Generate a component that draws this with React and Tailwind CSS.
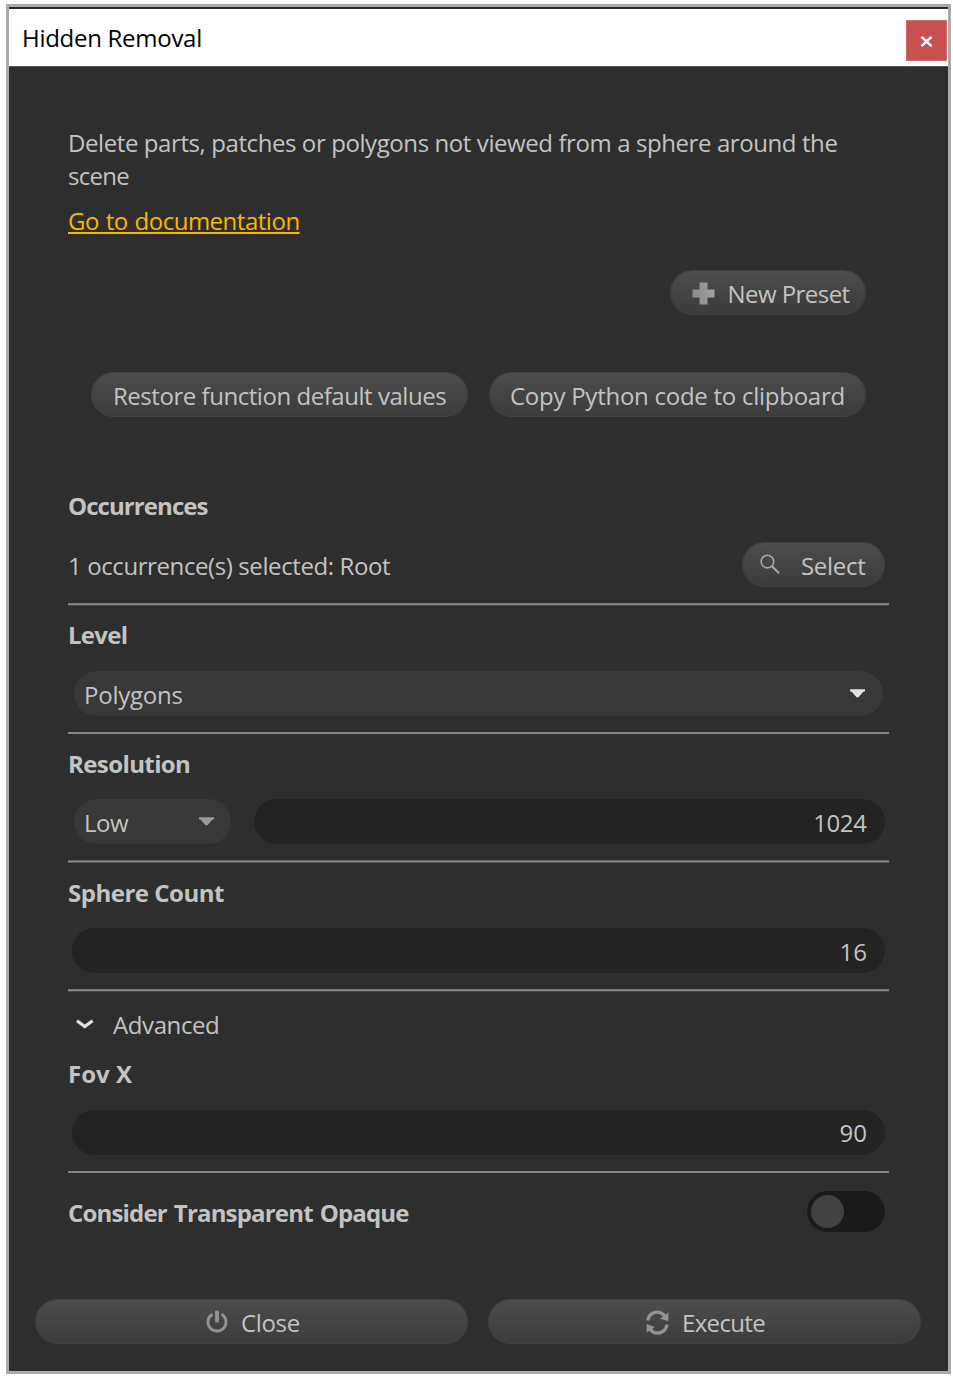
const pill = "flex h-[45px] rounded-full";
const raised = "bg-linear-to-b from-[#4c4c4c] to-[#3c3c3c] border border-[#424242] border-x-[#404040]";

function Label({ children, className = "" }) {
  return <div className={`h-[33px] whitespace-nowrap font-bold ${className}`}>{children}</div>;
}

function Divider({ className }) {
  return <div className={`h-[3px] w-full border-y ${className}`} />;
}

function Button({ children, className = "" }) {
  return <button type="button" className={`${pill} ${raised} whitespace-nowrap pt-[6px] ${className}`}>{children}</button>;
}

function Field({ value, className = "" }) {
  return <div className={`${pill} justify-end bg-[#232323] pt-[7px] ${className}`}>{value}</div>;
}

function Caret({ className }) {
  return (
    <svg className={`h-[9px] w-[15px] shrink-0 ${className}`} viewBox="0 0 15 9" fill="currentColor">
      <path d="M0 0.3H15V2.2L13 3L8.5 8.2H6.5L2 3L0 2.2Z" />
    </svg>
  );
}

function PlusIcon() {
  return (
    <svg className="mt-[4.5px] h-[23px] w-[23px] shrink-0" viewBox="0 0 23 23">
      <defs>
        <linearGradient id="plus" x1="0" x2="1">
          <stop offset="0" stopColor="#8a8a8a" />
          <stop offset="1" stopColor="#a2a2a2" />
        </linearGradient>
      </defs>
      <path d="M7.5 0.5H15.5V7.5H22.5V15.5H15.5V22.5H7.5V15.5H0.5V7.5H7.5Z" fill="url(#plus)" />
    </svg>
  );
}

function SearchIcon() {
  return (
    <svg className="mt-[5px] h-[21px] w-[21px] shrink-0" viewBox="0 0 21 21" fill="none" stroke="#a8a8a8">
      <circle cx="7.4" cy="7.6" r="6.3" strokeWidth="1.6" />
      <path d="M11.8 12L19 19.2" strokeWidth="2.1" />
    </svg>
  );
}

function PowerIcon() {
  return (
    <svg className="mt-[4px] h-[23px] w-[22px] shrink-0" viewBox="0 0 22 23" fill="none" stroke="#929292">
      <path d="M6.4 4.3A9 9 0 1 0 15.6 4.3" strokeWidth="3" />
      <path d="M11 0.7V12.5" strokeWidth="3.8" />
    </svg>
  );
}

function RefreshIcon() {
  return (
    <svg className="mt-[4px] h-[25px] w-[23px] shrink-0" viewBox="0 0 23 25">
      <g fill="none" stroke="#929292" strokeWidth="3.4">
        <path d="M1.8 10.6C3.2 1.6 13.6 -0.6 18.6 6" />
        <path d="M21 14.6C19.6 23.6 9.2 25.8 4.2 19.2" />
      </g>
      <g fill="#929292">
        <path d="M22.4 2.4V11.2L14 8.8L22.4 2.4Z" />
        <path d="M0.6 22.8V14L9 17L0.6 22.8Z" />
      </g>
    </svg>
  );
}

export default function App() {
  return (
    <div className="h-[1377px] w-[953px] overflow-hidden bg-white pl-[6px] pt-[4px] font-['Open_Sans','Noto_Sans',sans-serif] text-[24px] leading-[33px] text-[#c3c3c3]">
      <div className="h-[1370px] w-[945px] border-[3px] border-[#aeaaaa] bg-[#2e2e2e]">
        <header className="flex h-[60px] border-b border-t-2 border-b-[#565656] border-t-[#2a2a2c] bg-white pl-[13px]">
          <h1 className="mt-[12px] flex-1 whitespace-nowrap tracking-[-0.28px] text-black">Hidden Removal</h1>
          <button type="button" className="mr-px mt-[11px] flex h-[41px] w-[41px] items-center justify-center border border-[#d16a6a] bg-[#c75050] pt-px">
            <svg className="h-[11px] w-[13px]" viewBox="0 0 13 11" fill="none" stroke="#fff" strokeWidth="2.4">
              <path d="M1.5 0.8L11.5 10.2M11.5 0.8L1.5 10.2" />
            </svg>
          </button>
        </header>

        <main className="ml-[59px] flex w-[821px] flex-col pt-[59px]">
          <p>
            <span className="block whitespace-nowrap tracking-[-0.41px]">Delete parts, patches or polygons not viewed from a sphere around the</span>
            <span className="block tracking-[-0.7px]">scene</span>
          </p>
          <a href="#" className="mt-[12px] h-[33px] self-start whitespace-nowrap tracking-[-0.48px] [word-spacing:1px] text-[#fab702] underline decoration-2 underline-offset-[2px]">Go to documentation</a>

          <div className="mt-[33px] flex justify-end pr-[23px]">
            <Button className="w-[196px] pl-[20.5px]">
              <PlusIcon />
              <span className="ml-[13px] tracking-[-0.55px]">New Preset</span>
            </Button>
          </div>

          <div className="mt-[57px] flex justify-end gap-[21px] pr-[23px]">
            <Button className="w-[377px] pl-[21px]">
              <span className="tracking-[-0.46px]">Restore function default values</span>
            </Button>
            <Button className="w-[377px] pl-[20px]">
              <span className="tracking-[-0.26px]">Copy Python code to clipboard</span>
            </Button>
          </div>

          <Label className="mt-[72px] tracking-[-0.92px]">Occurrences</Label>
          <div className="mt-[20px] flex justify-between pr-[4px]">
            <span className="whitespace-nowrap pt-[7px] tracking-[-0.4px]">1 occurrence(s) selected: Root</span>
            <Button className="w-[143px] pl-[17px]">
              <SearchIcon />
              <span className="ml-[20px] tracking-[-0.3px]">Select</span>
            </Button>
          </div>
          <Divider className="mt-[16px] border-b-[#474747] border-t-[#7a7a7a] bg-[#8a8a8a]" />

          <Label className="mt-[12px] tracking-[-0.7px]">Level</Label>
          <div className={`${pill} ml-[6px] mr-[6px] mt-[20px] justify-between bg-[#383838] pl-[10px] pr-[18px]`}>
            <span className="pt-[7px] tracking-[-0.25px]">Polygons</span>
            <Caret className="mt-[18px] text-[#e2e2e2]" />
          </div>
          <Divider className="mt-[16px] border-b-[#2e2e2e] border-t-[#858585] bg-[#858585]" />

          <Label className="mt-[12px] tracking-[-0.6px]">Resolution</Label>
          <div className="mt-[19px] flex gap-[23px] pl-[6px] pr-[4px]">
            <div className={`${pill} w-[157px] justify-between bg-[#383838] pl-[10px] pr-[17.5px]`}>
              <span className="pt-[7px] tracking-[-0.5px]">Low</span>
              <Caret className="mt-[18px] text-[#999999]" />
            </div>
            <Field value="1024" className="flex-1 pr-[18.5px] tracking-[-0.4px]" />
          </div>
          <Divider className="mt-[16px] border-b-[#5a5a5a] border-t-[#5f5f5f] bg-[#8d8d8d]" />

          <Label className="mt-[13px] tracking-[-0.49px]">Sphere Count</Label>
          <Field value="16" className="ml-[4px] mr-[4px] mt-[19px] pr-[18px]" />
          <Divider className="mt-[16px] border-b-[#4a4a4a] border-t-[#777777] bg-[#8a8a8a]" />

          <div className="mt-[16px] flex h-[33px]">
            <svg className="ml-[8px] mt-[11px] h-[11px] w-[18px]" viewBox="0 0 18 11" fill="none" stroke="#e2e2e2" strokeWidth="3.2">
              <path d="M1 1.7L8.8 7.6L16.6 1.7" />
            </svg>
            <span className="ml-[19px] tracking-[-0.4px]">Advanced</span>
          </div>
          <Label className="mt-[16px]">Fov X</Label>
          <Field value="90" className="ml-[4px] mr-[4px] mt-[20px] pr-[18px] !pt-[6px]" />
          <Divider className="mt-[16px] border-b-[#2e2e2e] border-t-[#858585] bg-[#858585]" />

          <div className="mt-[17px] flex h-[41px] justify-between pr-[4px]">
            <Label className="pt-[5px] tracking-[-0.82px] [word-spacing:1.5px]">Consider Transparent Opaque</Label>
            <div role="switch" aria-checked="false" className="flex h-[41px] w-[78px] items-center rounded-full bg-[#1a1a1a] pl-[4px]">
              <div className="h-[33px] w-[33px] rounded-full bg-[#424242]" />
            </div>
          </div>
        </main>

        <footer className="mt-[67px] flex gap-[20px] pl-[26px]">
          <Button className="w-[433px] pl-[170px]">
            <PowerIcon />
            <span className="ml-[13px] tracking-[-0.35px]">Close</span>
          </Button>
          <Button className="w-[433px] pl-[157px]">
            <RefreshIcon />
            <span className="ml-[13px] tracking-[-0.65px]">Execute</span>
          </Button>
        </footer>
      </div>
    </div>
  );
}
